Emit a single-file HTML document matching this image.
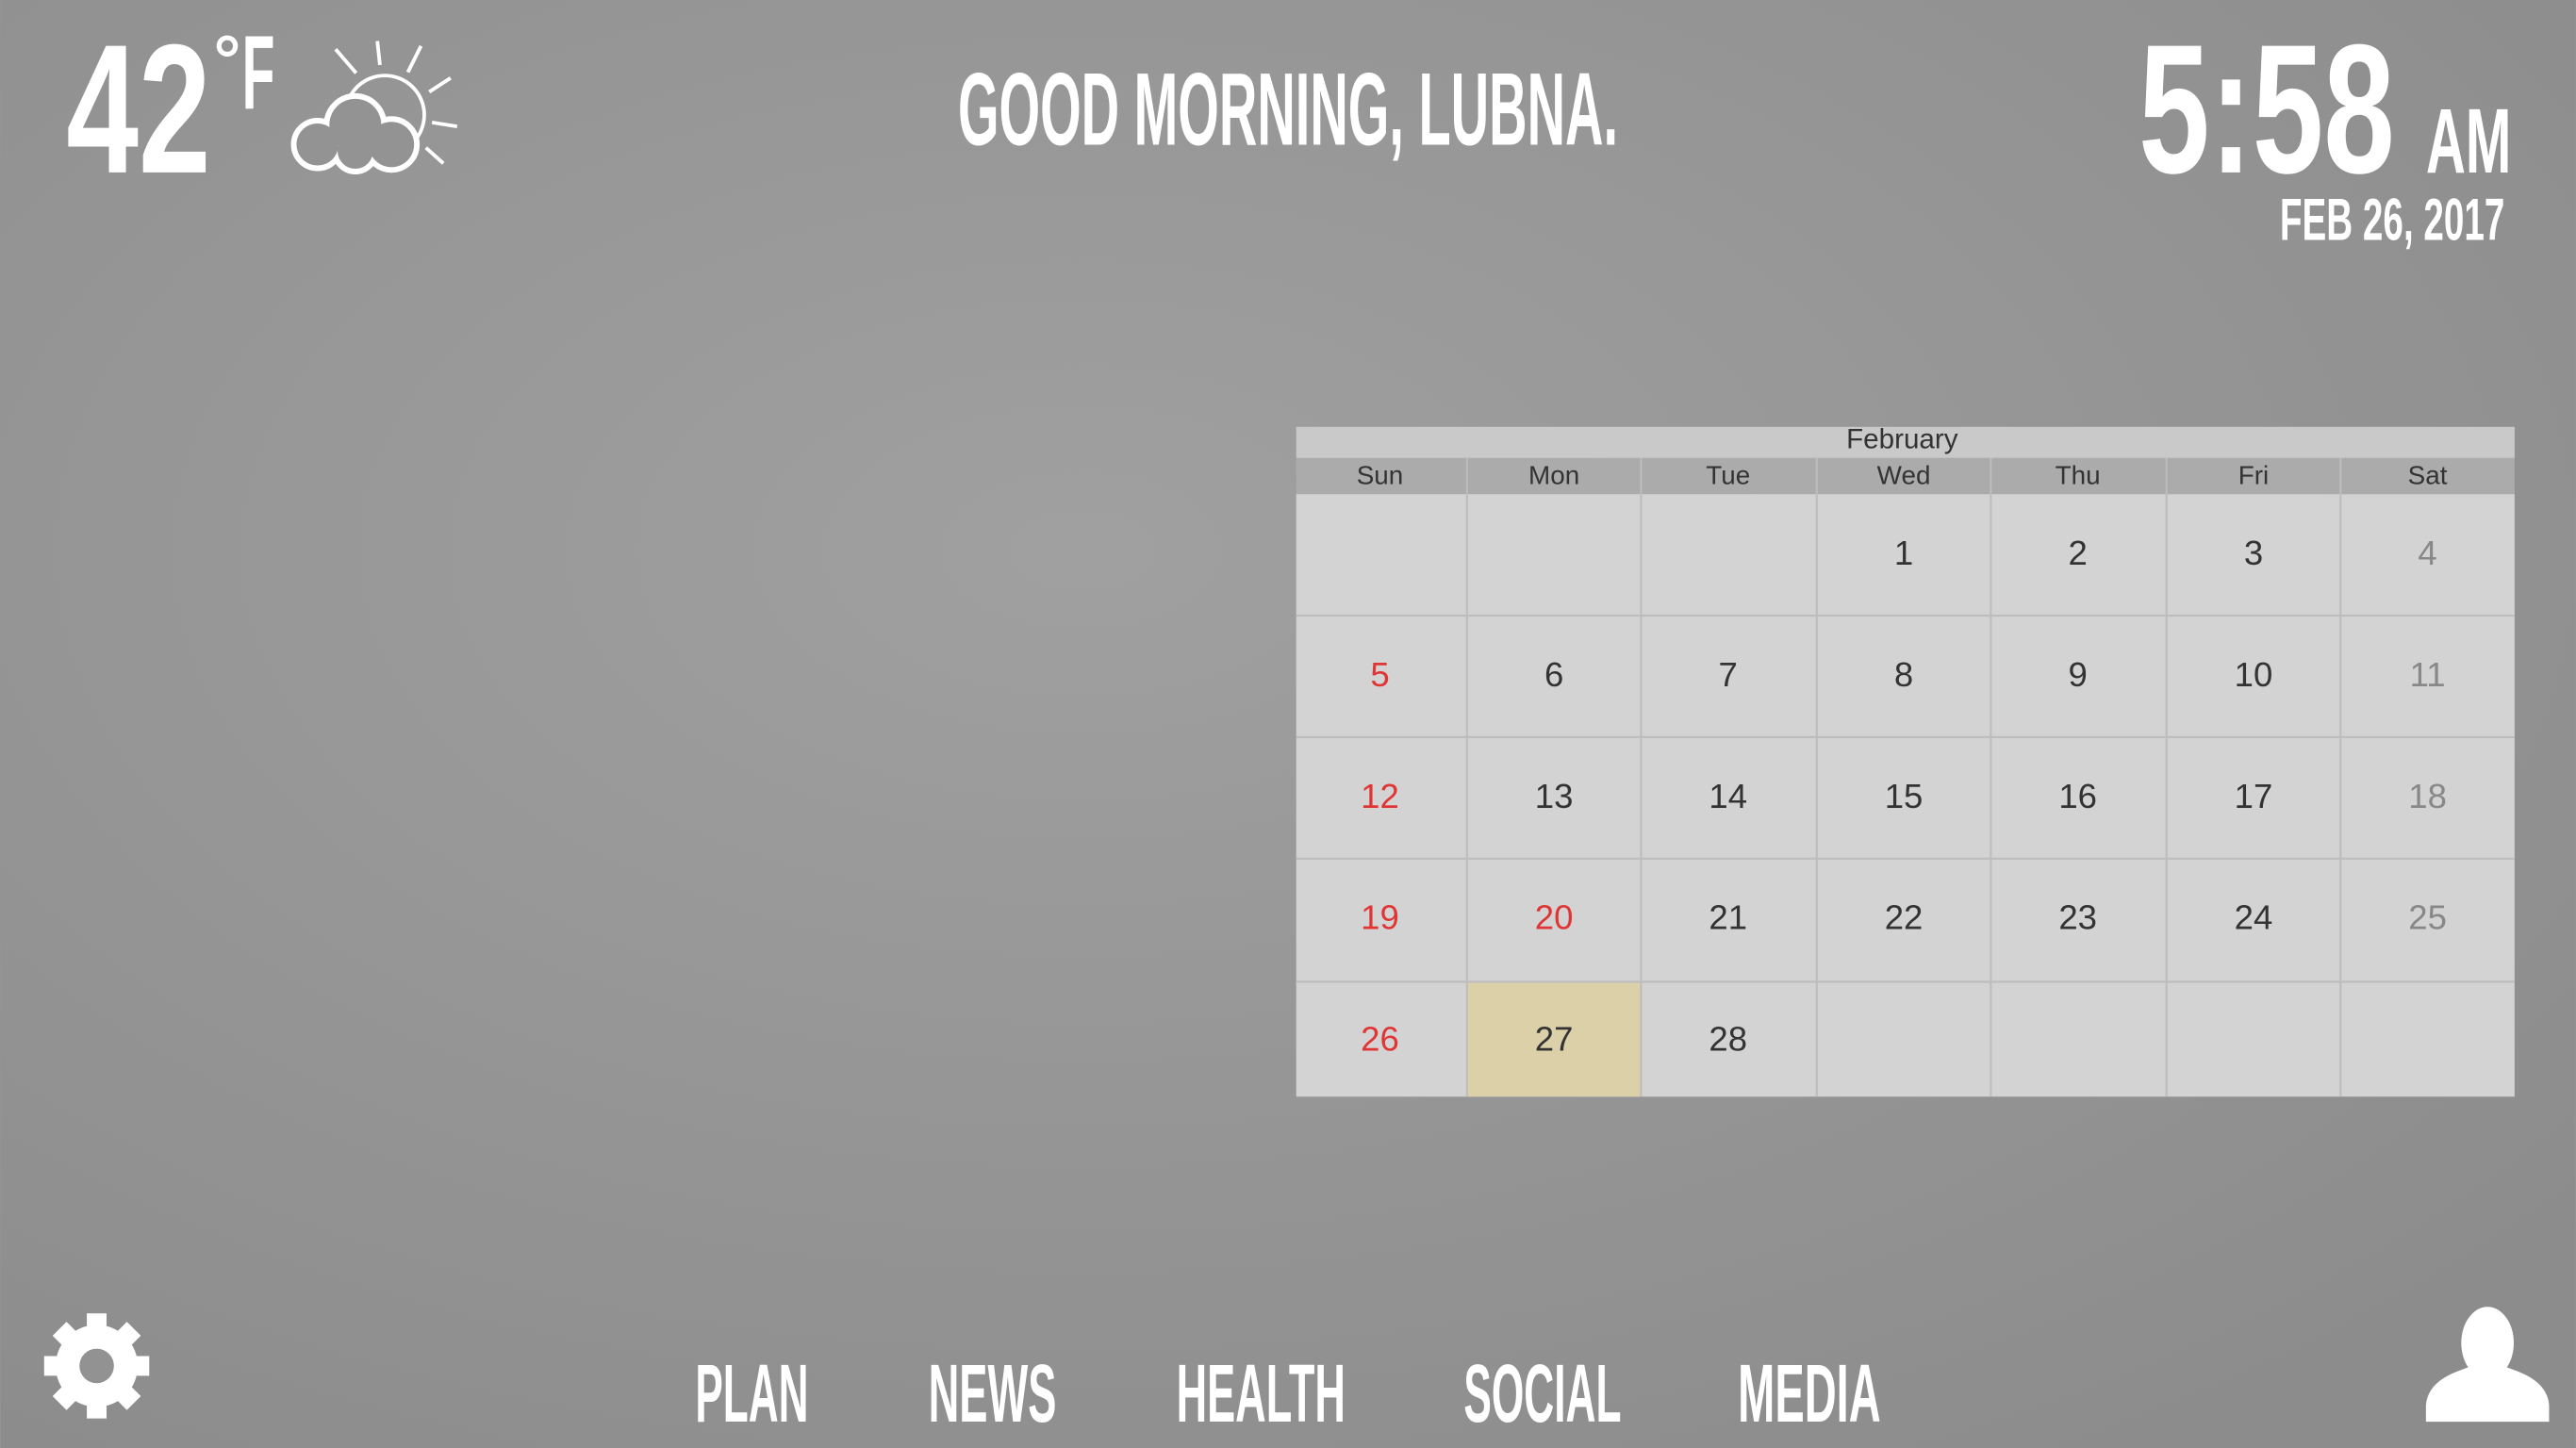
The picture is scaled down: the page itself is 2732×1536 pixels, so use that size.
<!DOCTYPE html>
<html><head><meta charset="utf-8"><style>
html,body{margin:0;padding:0;width:2732px;height:1536px;overflow:hidden;background:#949494}
svg{display:block}
.c{font-family:"Liberation Sans Narrow","Liberation Sans",sans-serif;font-weight:bold;fill:#fff}
.d{font-family:"Liberation Sans",sans-serif;fill:#333;text-anchor:middle}
</style></head><body>
<svg width="2732" height="1536" viewBox="0 0 1568 882" xmlns="http://www.w3.org/2000/svg">
<defs>
<radialGradient id="bg" cx="0.42" cy="0.38" r="0.75">
<stop offset="0" stop-color="#a0a0a0"/><stop offset="1" stop-color="#8c8c8c"/>
</radialGradient>
</defs>
<rect width="1568" height="882" fill="url(#bg)"/>

<text class="c" x="40" y="105" font-size="112" textLength="88" lengthAdjust="spacingAndGlyphs">42</text>
<circle cx="138" cy="28" r="5" fill="none" stroke="#fff" stroke-width="3"/>
<text class="c" x="147" y="66" font-size="64" textLength="20" lengthAdjust="spacingAndGlyphs">F</text>

<g stroke="#fff" stroke-width="2.2" fill="none" stroke-linecap="butt">
<line x1="204" y1="30" x2="216.5" y2="44.5"/>
<line x1="229.4" y1="25" x2="231" y2="39.6"/>
<line x1="256" y1="28" x2="248" y2="44"/>
<line x1="274" y1="47.5" x2="261" y2="56"/>
<line x1="262.7" y1="74.6" x2="278" y2="77"/>
<line x1="259" y1="90" x2="269.6" y2="99.5"/>
<circle cx="234" cy="70" r="24"/>
<circle cx="193" cy="88" r="14" stroke-width="4.4"/>
<circle cx="216" cy="76" r="17" stroke-width="4.4"/>
<circle cx="238" cy="88" r="15" stroke-width="4.4"/>
<circle cx="216" cy="92" r="12" stroke-width="4.4"/>
</g>
<g fill="#939393">
<circle cx="193" cy="88" r="12.8"/>
<circle cx="216" cy="76" r="15.8"/>
<circle cx="238" cy="88" r="13.8"/>
<circle cx="216" cy="92" r="10.8"/>
</g>

<text class="c" x="583" y="88" font-size="63" textLength="402" lengthAdjust="spacingAndGlyphs">GOOD MORNING, LUBNA.</text>

<text class="c" x="1302" y="105" font-size="112" textLength="156" lengthAdjust="spacingAndGlyphs">5:58</text>
<text class="c" x="1477" y="105" font-size="56" textLength="52" lengthAdjust="spacingAndGlyphs">AM</text>
<text class="c" x="1388" y="146" font-size="36" textLength="137" lengthAdjust="spacingAndGlyphs">FEB 26, 2017</text>

<!-- calendar -->
<rect x="789" y="260" width="742" height="19" fill="#c9c9c9"/>
<text class="d" x="1158" y="273" font-size="17" fill="#444">February</text>
<rect x="789" y="279" width="742" height="22" fill="#ababab"/>
<rect x="789" y="301" width="742" height="367" fill="#d3d3d3"/>
<rect x="893" y="598" width="106" height="70" fill="#dcd0a8"/>
<g stroke="#bdbdbd" stroke-width="1.2">
<line x1="893" y1="279" x2="893" y2="668"/><line x1="999" y1="279" x2="999" y2="668"/>
<line x1="1106" y1="279" x2="1106" y2="668"/><line x1="1212" y1="279" x2="1212" y2="668"/>
<line x1="1319" y1="279" x2="1319" y2="668"/><line x1="1425" y1="279" x2="1425" y2="668"/>
<line x1="789" y1="375" x2="1531" y2="375"/><line x1="789" y1="449" x2="1531" y2="449"/>
<line x1="789" y1="523" x2="1531" y2="523"/><line x1="789" y1="598" x2="1531" y2="598"/>
</g>
<g class="d" font-size="16" fill="#444">
<text class="d" x="840" y="295" fill="#444">Sun</text><text class="d" x="946" y="295" fill="#444">Mon</text>
<text class="d" x="1052" y="295" fill="#444">Tue</text><text class="d" x="1159" y="295" fill="#444">Wed</text>
<text class="d" x="1265" y="295" fill="#444">Thu</text><text class="d" x="1372" y="295" fill="#444">Fri</text>
<text class="d" x="1478" y="295" fill="#444">Sat</text>
</g>
<g font-size="21">
<text class="d" x="1159" y="344">1</text><text class="d" x="1265" y="344">2</text><text class="d" x="1372" y="344">3</text><text class="d" x="1478" y="344" style="fill:#888">4</text>
<text class="d" x="840" y="418" style="fill:#e03535">5</text><text class="d" x="946" y="418">6</text><text class="d" x="1052" y="418">7</text><text class="d" x="1159" y="418">8</text><text class="d" x="1265" y="418">9</text><text class="d" x="1372" y="418">10</text><text class="d" x="1478" y="418" style="fill:#888">11</text>
<text class="d" x="840" y="492" style="fill:#e03535">12</text><text class="d" x="946" y="492">13</text><text class="d" x="1052" y="492">14</text><text class="d" x="1159" y="492">15</text><text class="d" x="1265" y="492">16</text><text class="d" x="1372" y="492">17</text><text class="d" x="1478" y="492" style="fill:#888">18</text>
<text class="d" x="840" y="566" style="fill:#e03535">19</text><text class="d" x="946" y="566" style="fill:#e03535">20</text><text class="d" x="1052" y="566">21</text><text class="d" x="1159" y="566">22</text><text class="d" x="1265" y="566">23</text><text class="d" x="1372" y="566">24</text><text class="d" x="1478" y="566" style="fill:#888">25</text>
<text class="d" x="840" y="640" style="fill:#e03535">26</text><text class="d" x="946" y="640">27</text><text class="d" x="1052" y="640">28</text>
</g>

<!-- gear -->
<g fill="#fff" transform="translate(58.5,832)">
<circle r="25"/>
<rect x="-6" y="-32" width="12" height="14" transform="rotate(0)"/>
<rect x="-6" y="-32" width="12" height="14" transform="rotate(45)"/>
<rect x="-6" y="-32" width="12" height="14" transform="rotate(90)"/>
<rect x="-6" y="-32" width="12" height="14" transform="rotate(135)"/>
<rect x="-6" y="-32" width="12" height="14" transform="rotate(180)"/>
<rect x="-6" y="-32" width="12" height="14" transform="rotate(225)"/>
<rect x="-6" y="-32" width="12" height="14" transform="rotate(270)"/>
<rect x="-6" y="-32" width="12" height="14" transform="rotate(315)"/>
<circle r="10.5" fill="#929292"/>
</g>

<g class="c">
<text class="c" x="423" y="866" font-size="50" textLength="69" lengthAdjust="spacingAndGlyphs">PLAN</text>
<text class="c" x="565" y="866" font-size="50" textLength="78" lengthAdjust="spacingAndGlyphs">NEWS</text>
<text class="c" x="716" y="866" font-size="50" textLength="103" lengthAdjust="spacingAndGlyphs">HEALTH</text>
<text class="c" x="891" y="866" font-size="50" textLength="96" lengthAdjust="spacingAndGlyphs">SOCIAL</text>
<text class="c" x="1058" y="866" font-size="50" textLength="87" lengthAdjust="spacingAndGlyphs">MEDIA</text>
</g>

<!-- person -->
<g fill="#fff">
<ellipse cx="1514.5" cy="818" rx="16" ry="22"/>
<path d="M1477,866 L1477,856 Q1478,842 1497,835 L1505,832 L1524,832 L1532,835 Q1551,842 1552,856 L1552,866 Z"/>
</g>
</svg>
</body></html>
